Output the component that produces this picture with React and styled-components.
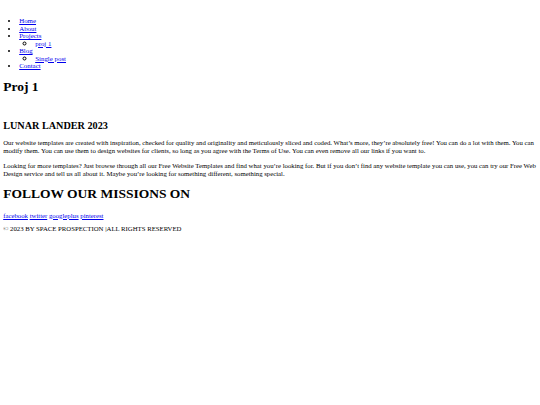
import React from 'react'
import styled, { createGlobalStyle } from "styled-components";

// the page is the browser default look, shrunk to ~0.4 of normal size

const GlobalStyle = createGlobalStyle`
body {
  margin: 3.2px;
  font-family: "Liberation Serif", "Times New Roman", serif;
  font-size: 6.75px;
  line-height: 7.5px;
  color: #000;
  background: #fff;
}
a {
  color: #0000ee;
}
`

const menu = [
  { label: "Home" },
  { label: "About" },
  { label: "Projects", sub: ["proj 1"] },
  { label: "Blog", sub: ["Single post"] },
  { label: "Contact" },
];

const socials = ["facebook", "twitter", "googleplus", "pinterest"];

export default function App() {
  return (
    <>
      <GlobalStyle />
      <Header>
        <Logo href="#">&nbsp;</Logo>
        <Menu>
          {menu.map((item) => (
            <li key={item.label}>
              <a href="#">{item.label}</a>
              {item.sub && (
                <SubMenu>
                  {item.sub.map((s) => (
                    <li key={s}><a href="#">{s}</a></li>
                  ))}
                </SubMenu>
              )}
            </li>
          ))}
        </Menu>
      </Header>

      <Main>
        <Title>Proj 1</Title>
        <Banner />
        <Heading>LUNAR LANDER 2023</Heading>
        <Text>
          Our website templates are created with inspiration, checked for quality and originality and meticulously sliced and coded. What’s more, they’re absolutely free! You can do a lot with them. You can modify them. You can use them to design websites for clients, so long as you agree with the Terms of Use. You can even remove all our links if you want to.
        </Text>
        <Text>
          Looking for more templates? Just browse through all our Free Website Templates and find what you’re looking for. But if you don’t find any website template you can use, you can try our Free Web Design service and tell us all about it. Maybe you’re looking for something different, something special.
        </Text>
      </Main>

      <Footer>
        <Title>FOLLOW OUR MISSIONS ON</Title>
        <Social>
          {socials.map((s, i) => (
            <React.Fragment key={s}>
              {i > 0 && " "}
              <a href="#">{s}</a>
            </React.Fragment>
          ))}
        </Social>
        <Copy>© 2023 BY SPACE PROSPECTION |ALL RIGHTS RESERVED</Copy>
      </Footer>
    </>
  )
}

const Header = styled.header`
display: block;
`

const Logo = styled.a`
display: block;
text-decoration: none;
`

const Menu = styled.ul`
margin: 6.6px 0;
padding-left: 16px;
list-style: disc;
font-size: 6.9px;
`

const SubMenu = styled.ul`
margin: 0;
padding-left: 16px;
list-style: circle;
li::marker {
  font-size: 9px;
}
`

const Main = styled.main`
display: block;
`

const Title = styled.h1`
font-size: 13.5px;
line-height: 14.7px;
font-weight: bold;
margin: 9.8px 0;
`

const Banner = styled.div`
height: 8.4px;
`

const Heading = styled.h2`
font-size: 10.2px;
line-height: 11px;
font-weight: bold;
margin: 8px 0;
`

const Text = styled.p`
margin: 7.8px 0;
`

const Footer = styled.footer`
display: block;
`

const Social = styled.div`
margin: 0;
`

const Copy = styled.p`
margin: 6.2px 0;
`
